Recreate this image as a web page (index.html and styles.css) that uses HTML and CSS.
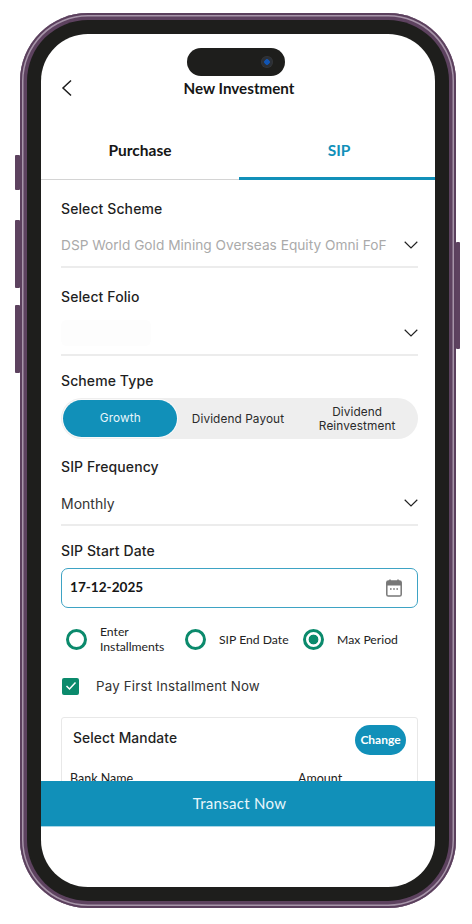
FILE: index.html
```html
<!DOCTYPE html>
<html lang="en">
<head>
  <meta charset="UTF-8">
  <title>New Investment</title>
  <meta name="viewport" content="width=device-width, initial-scale=1.0">
  <link rel="stylesheet" href="styles.css">
</head>
<body>

  <div class="phone">
    <span class="side-btn mute"></span>
    <span class="side-btn vol-up"></span>
    <span class="side-btn vol-down"></span>
    <span class="side-btn power"></span>

    <div class="bezel">
      <div class="notch"><span class="camera"></span></div>

      <div class="screen">
        <div class="header">
          <svg class="back" width="12" height="18" viewBox="0 0 12 18">
            <path d="M10 1.5 2 9l8 7.5" fill="none" stroke="#1c1c1c" stroke-width="1.5"/>
          </svg>
          <h1>New Investment</h1>
        </div>

        <div class="tabs">
          <div class="tab">Purchase</div>
          <div class="tab active">SIP</div>
        </div>

        <div class="content">
          <div class="field">
            <label>Select Scheme</label>
            <div class="select muted">
              <span>DSP World Gold Mining Overseas Equity Omni FoF</span>
              <svg class="chevron" width="14" height="8" viewBox="0 0 14 8"><path d="M.7.8 7 7 13.3.8" fill="none" stroke="#222" stroke-width="1.2"/></svg>
            </div>
          </div>

          <div class="field">
            <label>Select Folio</label>
            <div class="select">
              <span class="blurred"></span>
              <svg class="chevron" width="14" height="8" viewBox="0 0 14 8"><path d="M.7.8 7 7 13.3.8" fill="none" stroke="#222" stroke-width="1.2"/></svg>
            </div>
          </div>

          <div class="field type-field">
            <label>Scheme Type</label>
            <div class="segment">
              <div class="seg active">Growth</div>
              <div class="seg">Dividend Payout</div>
              <div class="seg">Dividend Reinvestment</div>
            </div>
          </div>

          <div class="field freq-field">
            <label>SIP Frequency</label>
            <div class="select">
              <span>Monthly</span>
              <svg class="chevron" width="14" height="8" viewBox="0 0 14 8"><path d="M.7.8 7 7 13.3.8" fill="none" stroke="#222" stroke-width="1.2"/></svg>
            </div>
          </div>

          <div class="field date-field">
            <label>SIP Start Date</label>
            <div class="date-input">
              <span class="date-text">17-12-2025</span>
              <svg width="16" height="18" viewBox="0 0 16 18">
                <path d="M4 0.5v3M12 0.5v3" stroke="#777" stroke-width="1.6"/>
                <rect x="0.8" y="2" width="14.4" height="15" rx="1.6" fill="#fff" stroke="#777" stroke-width="1.5"/>
                <path d="M0.8 3.5a1.5 1.5 0 0 1 1.5-1.5h11.4a1.5 1.5 0 0 1 1.5 1.5V6.5H0.8z" fill="#777"/>
                <path d="M4 10h1.6M7.2 10h1.6M10.4 10h1.6" stroke="#777" stroke-width="1.3"/>
              </svg>
            </div>
          </div>

          <div class="radios">
            <div class="radio r-one"><span class="dot"></span><span class="radio-text">Enter Installments</span></div>
            <div class="radio r-two"><span class="dot"></span><span class="radio-text">SIP End Date</span></div>
            <div class="radio r-three"><span class="dot on"></span><span class="radio-text">Max Period</span></div>
          </div>

          <div class="check-row">
            <span class="checkbox">
              <svg width="12" height="10" viewBox="0 0 12 10"><path d="M1.5 5 4.5 8 10.5 1.5" fill="none" stroke="#fff" stroke-width="1.5"/></svg>
            </span>
            <span>Pay First Installment Now</span>
          </div>

          <div class="card">
            <div class="card-top">
              <span class="card-title">Select Mandate</span>
              <span class="change">Change</span>
            </div>
            <div class="card-cols">
              <span>Bank Name</span>
              <span>Amount</span>
            </div>
          </div>
        </div>

        <div class="transact">Transact Now</div>
        <div class="home-area"></div>
      </div>
    </div>
  </div>

</body>
</html>
```

FILE: styles.css
```css
body {
  margin: 0;
  background: #fff;
  font-family: 'Inter', 'Liberation Sans', sans-serif;
  color: #1c1c1c;
  overflow: hidden;
}

.phone {
  position: relative;
  width: 436px;
  height: 895px;
  margin: 13px 0 0 20px;
  box-sizing: border-box;
  padding: 7px;
  border-radius: 68px;
  background: #5d425f;
  box-shadow: inset 0 0 0 2px #5b405d, inset 0 0 0 3.5px #a795a9;
}

.side-btn {
  position: absolute;
  width: 5px;
  background: #5d425f;
  border-radius: 1px;
}
.mute { left: -5px; top: 142px; height: 35px; }
.vol-up { left: -5px; top: 207px; height: 68px; }
.vol-down { left: -5px; top: 292px; height: 68px; }
.power { right: -4px; width: 4px; top: 229px; height: 107px; }

.bezel {
  position: relative;
  height: 100%;
  box-sizing: border-box;
  padding: 14px;
  border-radius: 61px;
  background: #1e1e1c;
}

.notch {
  position: absolute;
  top: 28px;
  left: 160px;
  width: 98px;
  height: 28px;
  border-radius: 14px;
  background: #1e1e1c;
  z-index: 2;
}

.camera {
  position: absolute;
  right: 12px;
  top: 8px;
  width: 12px;
  height: 12px;
  border-radius: 50%;
  background: radial-gradient(circle, #1055b5 0 2.5px, #2b2f36 3px 5px, #3a3a3a 6px);
}

.screen {
  height: 100%;
  display: flex;
  flex-direction: column;
  border-radius: 47px;
  background: #fff;
  overflow: hidden;
}

.header {
  position: relative;
  flex: none;
  height: 71px;
  box-sizing: border-box;
  padding: 44px 0 0 2px;
}

.header h1 {
  margin: 0;
  text-align: center;
  font: bold 15.2px/20px 'Lato', sans-serif;
  color: #161616;
}

.back {
  position: absolute;
  left: 20px;
  top: 45px;
}

.tabs {
  flex: none;
  display: flex;
  height: 75px;
}

.tab {
  flex: none;
  width: 198px;
  box-sizing: border-box;
  padding-top: 34px;
  text-align: center;
  font: bold 15.5px/22px 'Lato', sans-serif;
  color: #161616;
  border-bottom: 1.5px solid #d4d4d4;
}

.tab.active {
  width: 196px;
  padding-left: 4px;
  color: #1190b9;
  border-bottom: 3px solid #1190b9;
}

.content {
  flex: 1;
  min-height: 0;
  overflow: hidden;
  padding: 0 17px 0 20px;
}

.field {
  padding-top: 19px;
}

.field label {
  display: block;
  font-size: 14px;
  line-height: 20px;
  font-weight: 500;
  letter-spacing: 0.1px;
  color: #1f1f1f;
}

.select {
  display: flex;
  align-items: center;
  justify-content: space-between;
  height: 49px;
  padding-top: 5px;
  box-sizing: border-box;
  border-bottom: 2px solid #ececec;
  font-size: 14px;
  color: #333;
}

.muted {
  color: #aaa;
  font-size: 13.7px;
}

.blurred {
  width: 90px;
  height: 26px;
  border-radius: 6px;
  background: #fdfdfd;
}

.type-field {
  padding-top: 15px;
}

.segment {
  display: flex;
  align-items: center;
  margin-top: 7px;
  height: 41px;
  padding: 0 2px;
  box-sizing: border-box;
  border-radius: 21px;
  background: #eeeeee;
  font-size: 11.8px;
  line-height: 14px;
  color: #2a2a2a;
  text-align: center;
}

.seg {
  width: 122px;
  letter-spacing: 0.1px;
  padding-left: 1px;
  box-sizing: border-box;
}

.seg:last-child {
  width: 118px;
  padding: 0 12px;
}

.seg.active {
  width: 114px;
  height: 37px;
  line-height: 37px;
  border-radius: 19px;
  background: #1190b9;
  color: #e8f6fb;
  box-shadow: 0 0 0 1px #fafafa;
}

.freq-field {
  padding-top: 18px;
}

.date-field {
  padding-top: 15px;
}

.date-input {
  display: flex;
  align-items: center;
  justify-content: space-between;
  margin-top: 7px;
  height: 40px;
  box-sizing: border-box;
  padding: 0 15px 0 8px;
  border: 1.5px solid #3ea3c4;
  border-radius: 7px;
  font: bold 13.6px 'Lato', sans-serif;
  color: #161616;
}

.date-text {
  margin-bottom: 2px;
}

.radios {
  display: flex;
  align-items: center;
  height: 34px;
  margin-top: 14px;
  padding-left: 5px;
  font: 12.2px/15px 'Lato', sans-serif;
  color: #222;
}

.radio {
  display: flex;
  align-items: center;
}

.r-one { width: 119px; }
.r-two { width: 118px; }

.dot {
  flex: none;
  width: 21px;
  height: 21px;
  box-sizing: border-box;
  border: 3px solid #0b8a6c;
  border-radius: 50%;
  margin-right: 13px;
  background: #fff;
}

.dot.on {
  background: radial-gradient(circle, #0b8a6c 0 4.6px, #fff 5.2px);
}

.r-one .radio-text {
  width: 70px;
}

.check-row {
  display: flex;
  align-items: center;
  height: 20px;
  margin-top: 20px;
  font-size: 13.3px;
  color: #333;
  letter-spacing: 0.2px;
}

.checkbox {
  display: flex;
  align-items: center;
  justify-content: center;
  width: 17px;
  height: 17px;
  margin-left: 1px;
  margin-right: 17px;
  border-radius: 2px;
  background: #0b8a6c;
}

.card {
  margin-top: 21px;
  height: 100px;
  box-sizing: border-box;
  border: 1px solid #e8e8e8;
  border-radius: 3px;
  padding: 7px 11px 0 8px;
}

.card-top {
  display: flex;
  align-items: center;
  justify-content: space-between;
  height: 30px;
  padding-left: 3px;
}

.card-title {
  margin-bottom: 4px;
  font-size: 13.8px;
  font-weight: 500;
  letter-spacing: 0.1px;
  color: #1f1f1f;
}

.change {
  width: 51px;
  height: 30px;
  border-radius: 15px;
  background: #1190b9;
  color: #fff;
  text-align: center;
  font: bold 12px/30px 'Lato', sans-serif;
}

.card-cols {
  display: flex;
  margin-top: 16px;
  font: 12.5px/16px 'Lato', sans-serif;
  color: #222;
}

.card-cols span:first-child {
  width: 228px;
}

.transact {
  flex: none;
  height: 46px;
  padding-left: 3px;
  text-align: center;
  background: #1190b9;
  border-bottom: 1px solid #a9d6e6;
  box-sizing: border-box;
  color: #e8f6fb;
  font: 15px/45px 'Lato', sans-serif;
  letter-spacing: 0.3px;
}

.home-area {
  flex: none;
  height: 60px;
}
```
